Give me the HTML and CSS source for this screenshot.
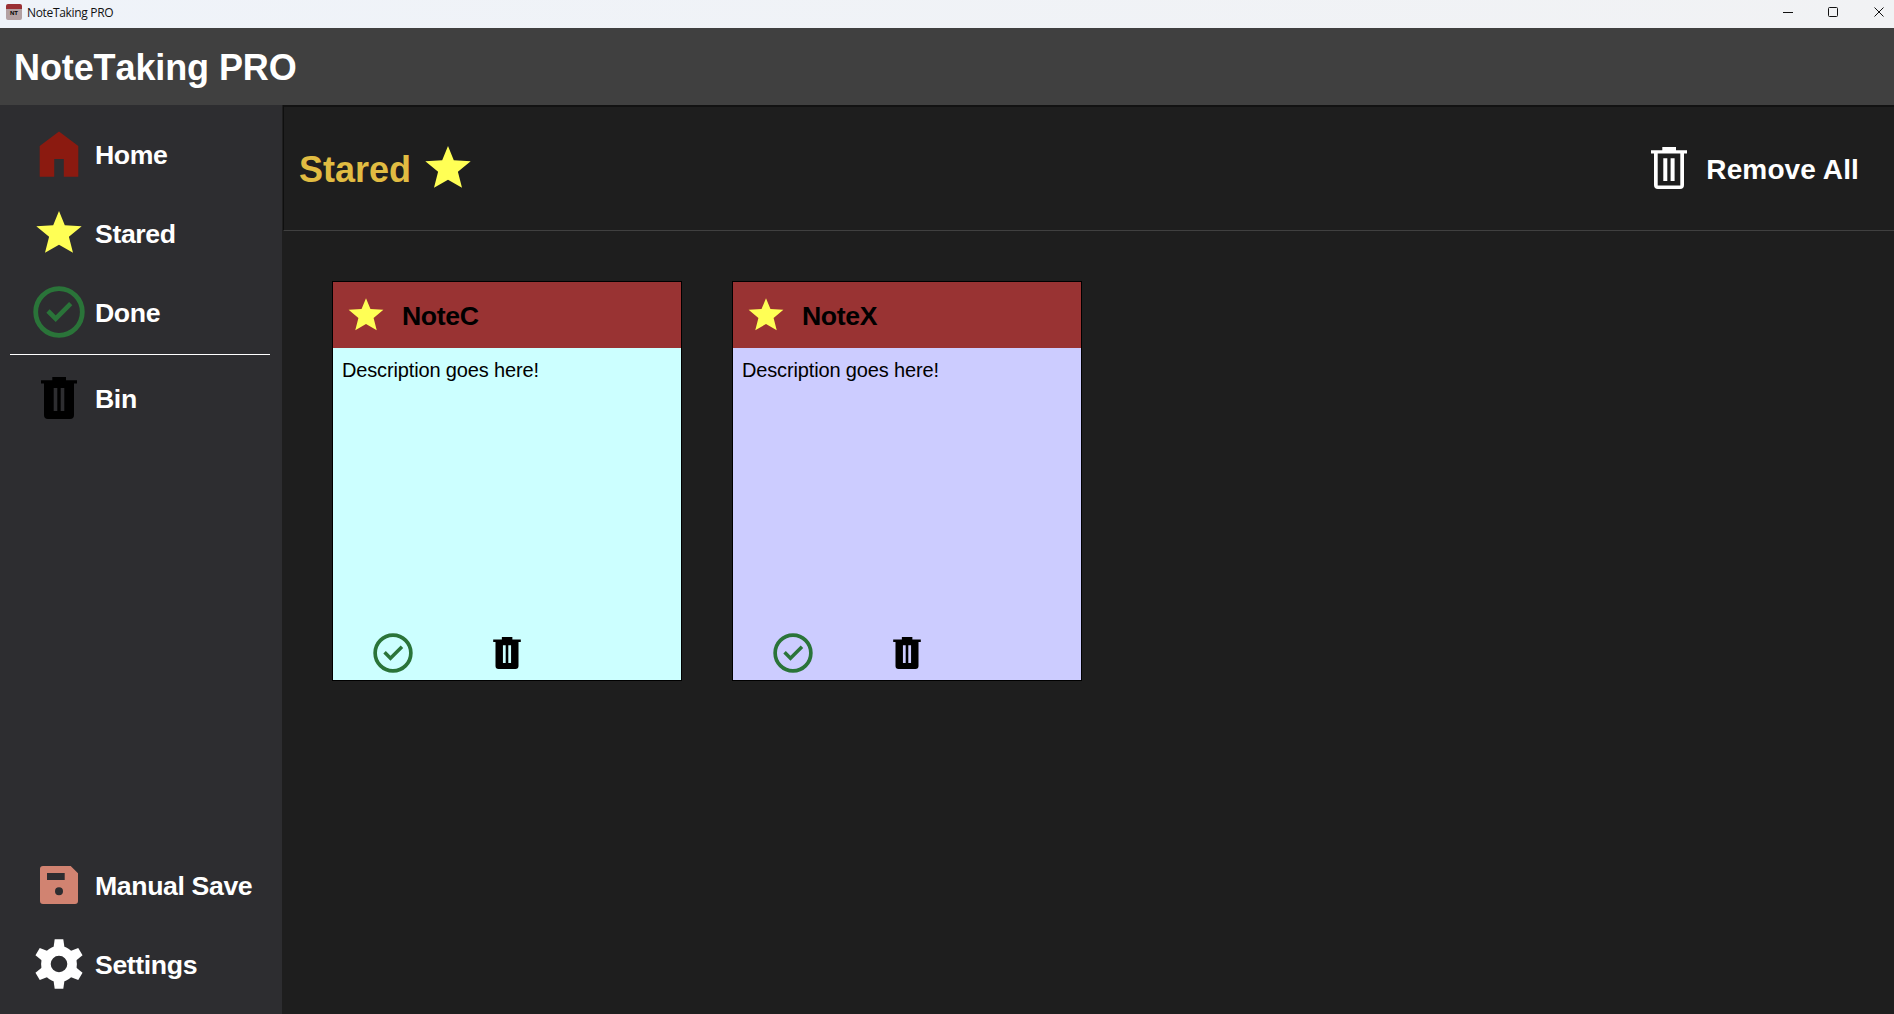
FILE: index.html
```html
<!DOCTYPE html>
<html lang="en">
<head>
<meta charset="utf-8">
<title>NoteTaking PRO</title>
<link rel="stylesheet" href="styles.css">
</head>
<body>
<svg class="defs" aria-hidden="true">
  <symbol id="home" viewBox="0 0 60 60"><path d="M10.7 52.7V22L30 7.5 49.3 22v30.7H34.8V35h-9.6v17.7z" fill="#8b1a10"/></symbol>
  <symbol id="star" viewBox="0 0 60 60"><path d="M30 8l5.8 14.2 16.9 1.1-12.8 10.5L44 49.8 30 41.8l-14 8 4.1-16L7.3 23.3l16.9-1.1z" fill="#ffff55"/></symbol>
  <symbol id="done" viewBox="0 0 60 60"><g fill="none" stroke="#2a7439"><circle cx="30" cy="30" r="23.3" stroke-width="4.8"/><path d="M19 29l7.7 7.7 15-15" stroke-width="4.6"/></g></symbol>
  <symbol id="bin" viewBox="0 0 60 60"><path fill-rule="evenodd" d="M12 12.3h11.3V9H37v3.3h11v3.2h-3V47a4 4 0 0 1-4 4H19a4 4 0 0 1-4-4V15.500h-3zM24.700 20v23h3.600V20zM31.700 20v23h3.600V20z"/></symbol>
  <symbol id="bin-outline" viewBox="0 0 60 60"><path fill="#fff" fill-rule="evenodd" d="M12 12.300h11.300V9H37v3.300h11v3.200h-3V47a4 4 0 0 1-4 4H19a4 4 0 0 1-4-4V15.500h-3zM18.700 15.500v32h22.600v-32zM24.300 20.300h4V43h-4zM31.600 20.300h4V43h-4z"/></symbol>
  <symbol id="save" viewBox="0 0 60 60"><path fill="#d18371" fill-rule="evenodd" d="M14 11h27.700l7.300 7.300V46a3 3 0 0 1-3 3H14a3 3 0 0 1-3-3V14a3 3 0 0 1 3-3zM18 18v7h17.700v-7zM30 32.300a4 4 0 1 0 0 8 4 4 0 0 0 0-8z"/></symbol>
  <symbol id="gear" viewBox="0 0 60 60">
    <circle cx="30" cy="30" r="13.100" fill="none" stroke="#fff" stroke-width="9.600"/>
    <g fill="#fff">
      <path id="tooth" d="M24.300 15l1.400-9.700h8.600L35.700 15z"/>
      <use href="#tooth" transform="rotate(60 30 30)"/><use href="#tooth" transform="rotate(120 30 30)"/><use href="#tooth" transform="rotate(180 30 30)"/><use href="#tooth" transform="rotate(240 30 30)"/><use href="#tooth" transform="rotate(300 30 30)"/>
    </g>
  </symbol>
</svg>
<div class="window">
  <div class="titlebar">
    <span class="logo">NT</span>
    <span class="caption">NoteTaking PRO</span>
    <svg class="controls" width="102" height="10" viewBox="0 0 102 10" fill="none" stroke="#111">
      <path d="M0 5.500h10"/><rect x="45.500" y=".5" width="9" height="9" rx="1"/><path d="M91.500.5l9 9m0-9l-9 9"/>
    </svg>
  </div>
  <header class="appbar">NoteTaking PRO</header>
  <div class="body">
    <nav class="sidebar">
      <a class="item"><svg class="icon"><use href="#home"/></svg><span>Home</span></a>
      <a class="item"><svg class="icon"><use href="#star"/></svg><span>Stared</span></a>
      <a class="item"><svg class="icon"><use href="#done"/></svg><span>Done</span></a>
      <hr class="divider">
      <a class="item"><svg class="icon"><use href="#bin"/></svg><span>Bin</span></a>
      <div class="spacer"></div>
      <a class="item"><svg class="icon"><use href="#save"/></svg><span>Manual Save</span></a>
      <a class="item"><svg class="icon"><use href="#gear"/></svg><span>Settings</span></a>
    </nav>
    <main class="main">
      <div class="heading">
        <h1>Stared</h1>
        <svg class="icon"><use href="#star"/></svg>
        <button class="remove"><svg class="icon"><use href="#bin-outline"/></svg><span>Remove All</span></button>
      </div>
      <div class="notes">
        <article class="note cyan">
          <div class="note-head"><svg class="icon"><use href="#star"/></svg><h2>NoteC</h2></div>
          <p>Description goes here!</p>
          <div class="actions"><svg class="icon"><use href="#done"/></svg><svg class="icon"><use href="#bin"/></svg></div>
        </article>
        <article class="note lavender">
          <div class="note-head"><svg class="icon"><use href="#star"/></svg><h2>NoteX</h2></div>
          <p>Description goes here!</p>
          <div class="actions"><svg class="icon"><use href="#done"/></svg><svg class="icon"><use href="#bin"/></svg></div>
        </article>
      </div>
    </main>
  </div>
</div>
</body>
</html>
```
FILE: styles.css
```css
* { box-sizing: border-box; margin: 0; padding: 0; }
body { font-family: "Liberation Sans", Arial, sans-serif; font-kerning: none; background: #1e1e1e; }
.defs { display: none; }
.window { display: flex; flex-direction: column; width: 1894px; height: 1014px; overflow: hidden; }
.icon { display: block; flex: none; width: 60px; height: 60px; }

.titlebar { display: flex; height: 28px; padding: 4px 9px 0 6px; background: linear-gradient(90deg, #eff3f9, #f1f2f4); }
.logo { width: 16px; height: 16px; border-radius: 2px; background: linear-gradient(#9a3034 5px, #b3a0a2 5px); color: #000; font-size: 6px; font-weight: bold; line-height: 19px; text-align: center; }
.caption { margin-left: 5px; color: #111; font-family: "Open Sans", "Noto Sans", sans-serif; font-size: 12px; line-height: 18px; letter-spacing: -0.33px; }
.controls { margin: 3px 0 0 auto; }

.appbar { height: 77px; padding-left: 14px; background: #404040; color: #fff; font-size: 36px; font-weight: bold; line-height: 80px; letter-spacing: -0.1px; }

.body { display: flex; flex: 1; min-height: 0; }
.sidebar { display: flex; flex-direction: column; width: 282px; padding: 10px 0; background: #2d2d30; }
.item { display: flex; height: 79px; padding: 9px 0 0 29px; color: #fff; font-size: 26.67px; font-weight: bold; line-height: 62px; letter-spacing: -0.38px; }
.item span { margin-left: 6px; }
.divider { height: 1px; margin: 2px 12px 4px 10px; border: 0; background: #fff; }
.spacer { flex: 1; }

.main { flex: 1; background: #1e1e1e; }
.heading { display: flex; height: 126px; padding: 31px 35px 0 15px; border-top: 2px solid #121212; border-bottom: 1px solid #404040; border-left: 1px solid #0f0f0f; margin-left: 1px; color: #fff; }
.heading h1 { width: 119px; color: #e1bc42; font-size: 36px; line-height: 64px; }
.remove { display: flex; margin-left: auto; border: 0; background: none; color: inherit; font: bold 28px/63px "Liberation Sans", Arial, sans-serif; letter-spacing: 0.12px; }
.remove span { margin-left: 7px; }

.notes { display: flex; gap: 50px; padding: 50px; }
.note { display: flex; flex-direction: column; width: 350px; height: 400px; border: 1px solid #000; color: #000; }
.cyan { background: #ccffff; }
.lavender { background: #ccccff; }
.note .icon { width: 46px; height: 46px; }
.note-head { display: flex; height: 66px; padding: 10px; background: #993333; }
.note-head h2 { margin-left: 13px; font-size: 26.67px; line-height: 48px; letter-spacing: -0.4px; }
.note p { padding: 9px 8px 9px 9px; font-size: 20px; line-height: 26px; letter-spacing: -0.15px; }
.actions { display: flex; gap: 68px; margin-top: auto; padding: 0 0 4px 37px; }
```
